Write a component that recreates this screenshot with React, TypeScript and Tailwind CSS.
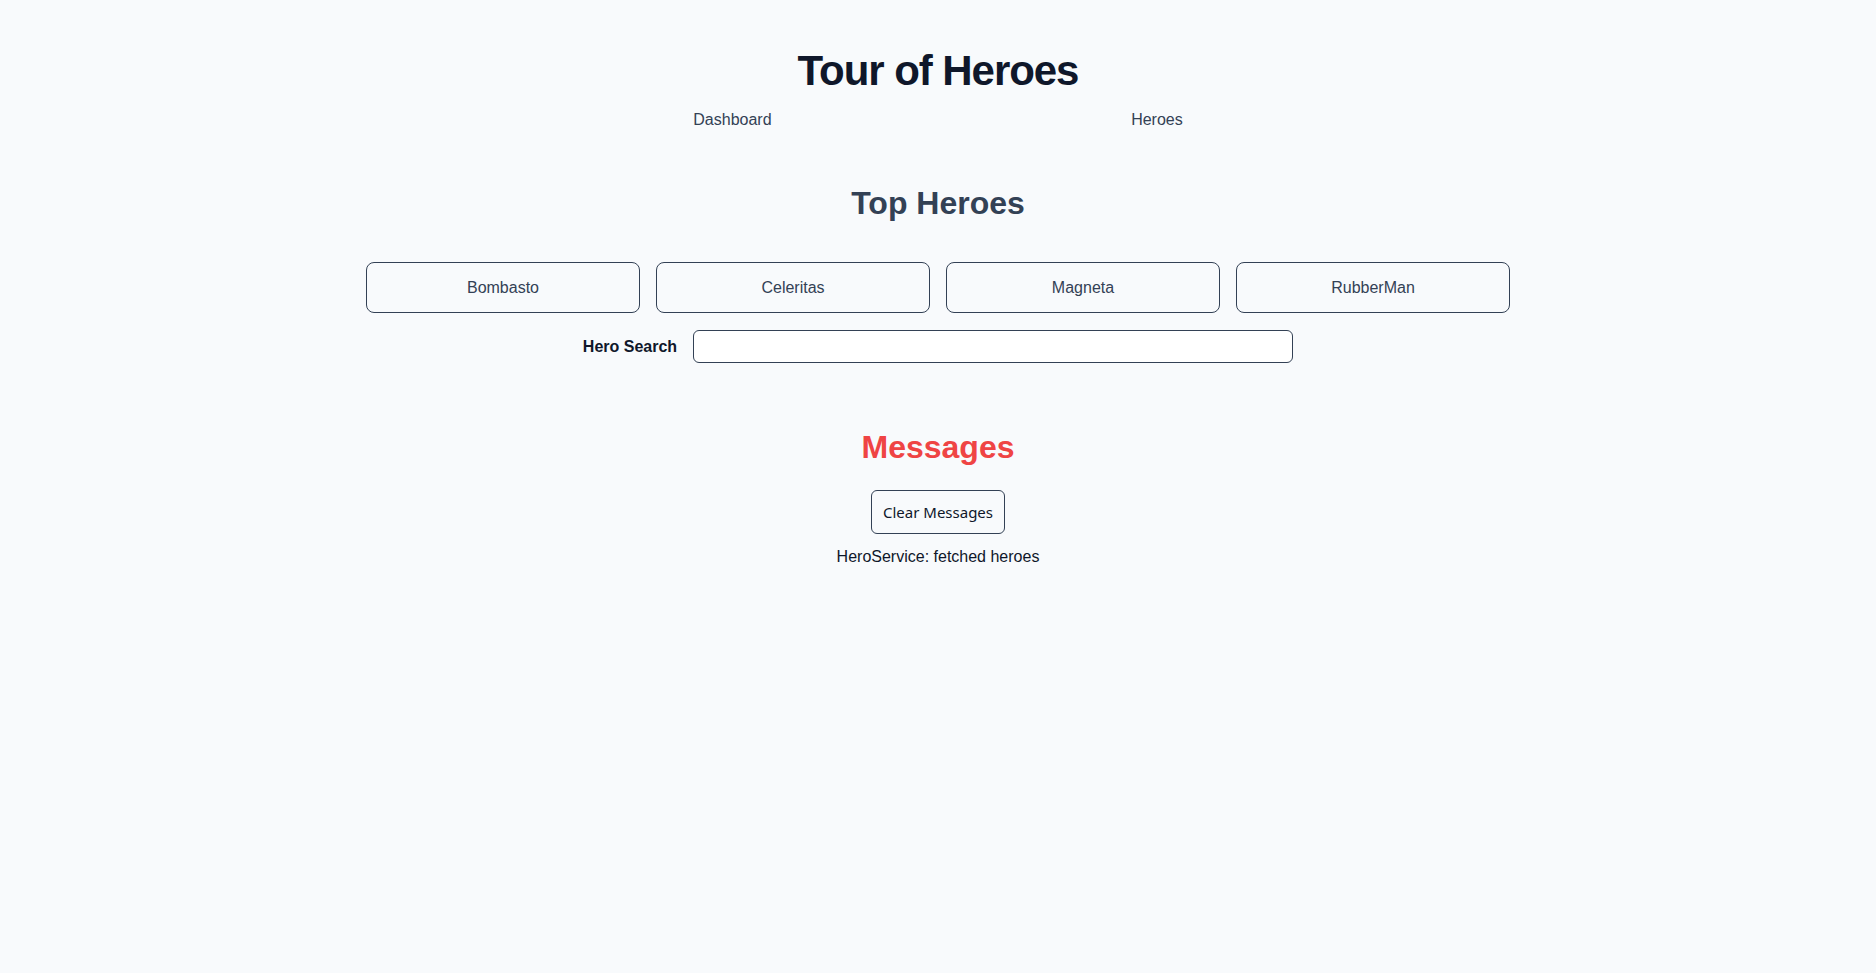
const heroes = ["Bombasto", "Celeritas", "Magneta", "RubberMan"];

const font = { fontFamily: '"Liberation Sans", Arial, sans-serif' };

export default function App() {
  return (
    <div
      className="min-h-screen bg-[#f8fafc] pt-[47px] text-[#334155]"
      style={font}
    >
      <h1 className="text-center text-[42px] font-bold leading-[48px] tracking-tight text-[#0f172a]">
        Tour of Heroes
      </h1>

      <nav className="mx-auto mt-[13px] flex w-[849px] justify-around text-base leading-6">
        <a className="text-[#334155]">Dashboard</a>
        <a className="text-[#334155]">Heroes</a>
      </nav>

      <h2 className="mt-[51px] text-center text-[32px] font-bold leading-10 text-[#334155]">
        Top Heroes
      </h2>

      <div className="mx-auto mt-[39px] grid w-[1144px] grid-cols-4 gap-4">
        {heroes.map((h) => (
          <a
            key={h}
            className="flex h-[51px] items-center justify-center rounded-lg border border-[#334155] pt-px text-base text-[#334155]"
          >
            {h}
          </a>
        ))}
      </div>

      <div className="mt-[17px] flex items-center justify-center gap-4">
        <label className="text-base font-bold text-[#0f172a]">Hero Search</label>
        <input className="h-[33px] w-[600px] rounded-md border border-[#334155] bg-white px-2 outline-none" />
      </div>

      <h2 className="mt-[64px] text-center text-[32px] font-bold leading-10 text-[#ef4444]">
        Messages
      </h2>

      <div className="mt-[23px] flex justify-center">
        <button
          className="flex h-[44px] items-center rounded-md border border-[#334155] px-[11px] text-[15px] text-[#0f172a]"
          style={{ fontFamily: '"Noto Sans", sans-serif' }}
        >
          Clear Messages
        </button>
      </div>

      <p className="mt-[11px] text-center text-base leading-6 text-[#0f172a]">
        HeroService: fetched heroes
      </p>
    </div>
  );
}
